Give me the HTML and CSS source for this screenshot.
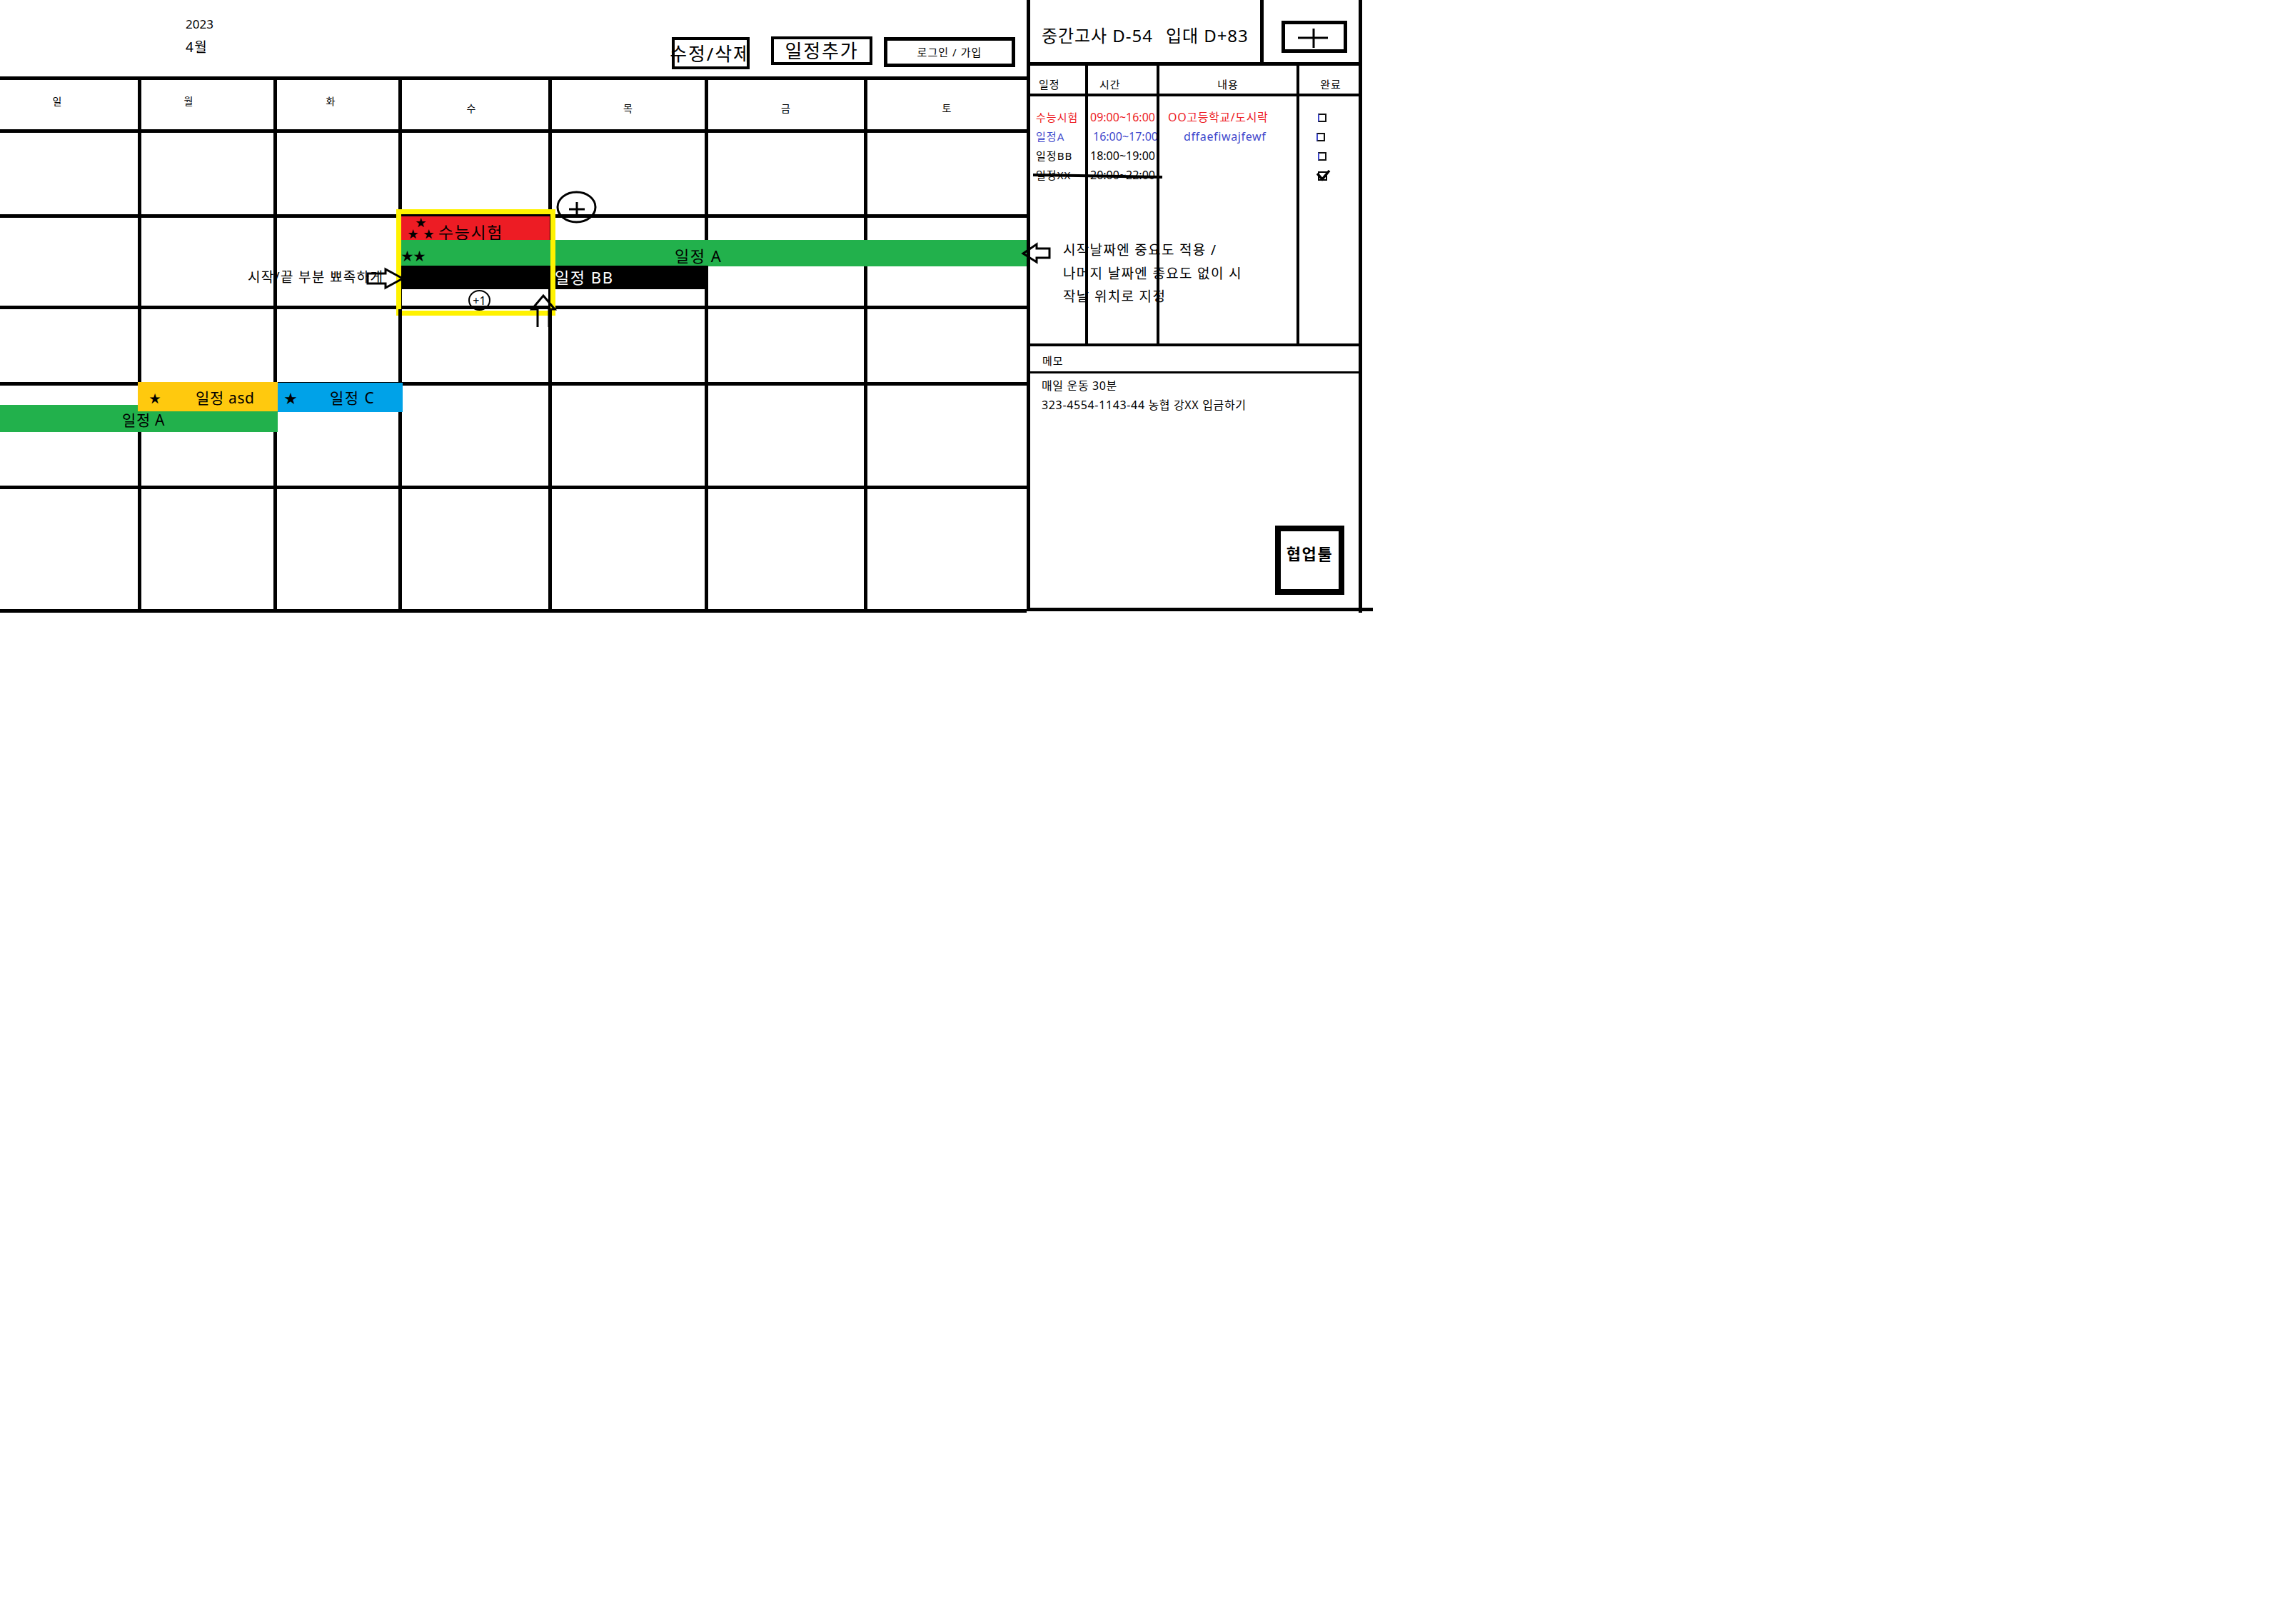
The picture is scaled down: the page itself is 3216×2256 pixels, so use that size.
FILE: index.html
```html
<!DOCTYPE html>
<html lang="ko">
<head>
<meta charset="utf-8">
<title>캘린더</title>
<link rel="stylesheet" href="styles.css">
</head>
<body>
<div class="page">
  <main class="main">
    <header class="topbar">
      <div class="date">
        <div class="year">2023</div>
        <div class="month">4월</div>
      </div>
      <div class="actions">
        <div class="btn btn-edit"><span>수정/삭제</span></div>
        <div class="btn btn-add"><span>일정추가</span></div>
        <div class="btn btn-login"><span>로그인 / 가입</span></div>
      </div>
    </header>

    <section class="calendar">
      <div class="row dow">
        <div class="cell d-hi d-sun">일</div>
        <div class="cell d-hi d-mon">월</div>
        <div class="cell d-hi d-tue">화</div>
        <div class="cell d-wed">수</div>
        <div class="cell">목</div>
        <div class="cell">금</div>
        <div class="cell">토</div>
      </div>
      <div class="row week w1">
        <div class="cell"></div><div class="cell"></div><div class="cell"></div><div class="cell"></div><div class="cell"></div><div class="cell"></div><div class="cell"></div>
      </div>
      <div class="row week w2">
        <div class="cell"></div><div class="cell"></div><div class="cell"></div><div class="cell"></div><div class="cell"></div><div class="cell"></div><div class="cell"></div>
        <div class="ev ev-red">
          <span class="stars3"><span class="star">★</span><span class="stars-pair"><span class="star">★</span><span class="star">★</span></span></span>
          <span class="ev-text">수능시험</span>
        </div>
        <div class="ev ev-a1"><span class="star s-17">★★</span><span class="ev-text">일정 A</span></div>
        <div class="ev ev-bb"><span class="ev-text">일정 BB</span></div>
        <div class="focus-frame"></div>
      </div>
      <div class="row week w3">
        <div class="cell"></div><div class="cell"></div><div class="cell"></div><div class="cell"></div><div class="cell"></div><div class="cell"></div><div class="cell"></div>
      </div>
      <div class="row week w4">
        <div class="cell"></div><div class="cell"></div><div class="cell"></div><div class="cell"></div><div class="cell"></div><div class="cell"></div><div class="cell"></div>
        <div class="ev ev-a2"><span class="ev-text">일정 A</span></div>
        <div class="ev ev-asd"><span class="star s-16">★</span><span class="ev-text">일정 asd</span></div>
        <div class="ev ev-c"><span class="star s-18">★</span><span class="ev-text">일정 C</span></div>
      </div>
      <div class="row week w5">
        <div class="cell"></div><div class="cell"></div><div class="cell"></div><div class="cell"></div><div class="cell"></div><div class="cell"></div><div class="cell"></div>
      </div>
    </section>
  </main>

  <aside class="side">
    <div class="side-head">
      <div class="dday"><span>중간고사 D-54</span><span class="dday-gap">입대 D+83</span></div>
      <div class="add-cell">
        <div class="add-btn">
          <svg width="82" height="35" viewBox="0 0 82 35"><path d="M18 19H60M40 6V33" stroke="#000" stroke-width="3" fill="none"/></svg>
        </div>
      </div>
    </div>

    <div class="todo">
      <div class="col c1">
        <div class="th">일정</div>
        <div class="tb">
          <div class="td red">수능시험</div>
          <div class="td blue">일정A</div>
          <div class="td">일정BB</div>
          <div class="td">일정XX</div>
        </div>
      </div>
      <div class="col c2">
        <div class="th">시간</div>
        <div class="tb">
          <div class="td red">09:00~16:00</div>
          <div class="td blue shift">16:00~17:00</div>
          <div class="td">18:00~19:00</div>
          <div class="td">20:00~22:00</div>
        </div>
      </div>
      <div class="col c3">
        <div class="th">내용</div>
        <div class="tb">
          <div class="td red">OO고등학교/도시락</div>
          <div class="td blue shift">dffaefiwajfewf</div>
          <div class="td"></div>
          <div class="td"></div>
        </div>
      </div>
      <div class="col c4">
        <div class="th">완료</div>
        <div class="tb">
          <div class="td"><span class="box"></span></div>
          <div class="td shift"><span class="box"></span></div>
          <div class="td"><span class="box"></span></div>
          <div class="td"><svg class="checked" width="20" height="16" viewBox="0 0 20 16"><rect x="3" y="3" width="11" height="11" fill="none" stroke="#000" stroke-width="2"/><path d="M1 5L8 13L18 1" fill="none" stroke="#000" stroke-width="3.5"/></svg></div>
        </div>
      </div>
    </div>

    <div class="memo-head">메모</div>
    <div class="memo-body">
      <p>매일 운동 30분</p>
      <p>323-4554-1143-44 농협 강XX 입금하기</p>
      <div class="collab">협업툴</div>
    </div>
  </aside>

  <div class="notes">
    <svg class="n-plus" width="57" height="46" viewBox="0 0 57 46">
      <ellipse cx="28.5" cy="23" rx="26.5" ry="21" fill="none" stroke="#000" stroke-width="3"/>
      <path d="M18 26H40M29 16V34" stroke="#000" stroke-width="3" fill="none"/>
    </svg>
    <div class="n-plus1">+1</div>
    <svg class="n-up" width="42" height="50" viewBox="0 0 42 50">
      <polyline points="13,48 13,23 5,23 21,4 37,23 29,23 29,48" fill="none" stroke="#000" stroke-width="3"/>
    </svg>
    <p class="n-tip-left">시작/끝 부분 뾰족하게</p>
    <svg class="n-right" width="56" height="32" viewBox="0 0 56 32">
      <polygon points="3,9 28,9 28,3 52,16 28,29 28,23 3,23" fill="none" stroke="#000" stroke-width="3"/>
    </svg>
    <svg class="n-left" width="44" height="31" viewBox="0 0 44 31">
      <polygon points="3,16 22,3 22,9 40,9 40,22 22,22 22,28" fill="none" stroke="#000" stroke-width="3"/>
    </svg>
    <p class="n-tip-right">시작날짜엔 중요도 적용 /<br>나머지 날짜엔 중요도 없이 시<br>작날 위치로 지정</p>
    <svg class="n-strike" width="188" height="12" viewBox="0 0 188 12">
      <line x1="3" y1="5" x2="184" y2="8" stroke="#000" stroke-width="4"/>
    </svg>
  </div>
</div>
</body>
</html>
```

FILE: styles.css
```css
* { box-sizing: border-box; }

html, body {
  margin: 0;
  padding: 0;
  background: #fff;
}

body {
  font-family: "Noto Sans", "Noto Sans CJK KR", sans-serif;
  color: #000;
}

/* Hangul-heavy text: widen the advance a little */
.month, .dow, .btn-edit span, .btn-add span, .btn-login span,
.ev-text, .th, .c1 .td, .memo-head,
.collab, .n-tip-left, .n-tip-right {
  letter-spacing: 0.07em;
}
.dday, .memo-body p, .c3 .td { letter-spacing: 0.04em; }
.ev-asd .ev-text, .ev-a2 .ev-text { letter-spacing: 0.03em; }

.page {
  position: relative;
  display: flex;
  align-items: flex-start;
  width: 1908px;
}

/* ---------- left: header + calendar ---------- */
.main {
  width: 1438px;
  flex: none;
}

.topbar {
  height: 107px;
  display: flex;
  align-items: flex-start;
  padding: 0 16px 0 260px;
}

.date { padding-top: 23px; }
.year { font-size: 17px; line-height: 22px; }
.month { font-size: 19px; line-height: 24px; margin-top: 9px; }

.actions {
  margin-left: auto;
  display: flex;
  align-items: flex-start;
  padding-top: 51px;
}

.btn {
  display: flex;
  justify-content: center;
  align-items: center;
  border: 4px solid #000;
  white-space: nowrap;
  line-height: 1;
}

.btn-edit { width: 109px; height: 45px; margin-top: 1px; font-size: 26px; }
.btn-add { width: 142px; height: 40px; margin-left: 30px; font-size: 26px; }
.btn-login { width: 184px; height: 42px; margin-left: 16px; margin-top: 1px; border-width: 5px; font-size: 15px; }

.calendar { border-top: 5px solid #000; }

.row {
  position: relative;
  display: grid;
  grid-template-columns: 198px 190px 175px 210px 219px 223px 223px;
  border-bottom: 5px solid #000;
}

.cell { border-right: 5px solid #000; }
.row > .cell:nth-child(7) { border-right: 0; }

.dow { height: 74px; }
.dow .cell {
  display: flex;
  justify-content: center;
  align-items: flex-start;
  padding-top: 30px;
  font-size: 14px;
  line-height: 20px;
}
.dow .d-hi { padding-top: 20px; }
.dow .d-sun { padding-right: 32px; }
.dow .d-mon { padding-right: 52px; }
.dow .d-tue { padding-right: 19px; }
.dow .d-wed { padding-right: 10px; }

.w1 { height: 119px; }
.w2 { height: 128px; }
.w3 { height: 107px; }
.w4 { height: 145px; }
.w5 { height: 173px; }

/* ---------- events ---------- */
.ev {
  position: absolute;
  display: flex;
  align-items: flex-start;
  white-space: nowrap;
  line-height: 24px;
}

.star { font-family: "Noto Sans CJK KR", "DejaVu Sans", sans-serif; }
.s-16 { font-size: 16px; }
.s-17 { font-size: 17px; }
.s-18 { font-size: 18px; }

.ev-red {
  left: 562px; top: -2px; width: 208px; height: 33px;
  background: #ed1c24;
}
.stars3 {
  display: flex;
  flex-direction: column;
  align-items: center;
  margin-left: 9px;
  font-size: 15px;
  line-height: 16px;
}
.stars-pair { display: flex; gap: 7px; }
.ev-red .ev-text { margin: 10px 0 0 6px; font-size: 23px; }

.ev-a1 {
  left: 562px; top: 31px; width: 881px; height: 37px;
  padding-top: 10px;
  background: #22b14c;
}
.ev-a1 .ev-text { margin-left: 349px; font-size: 22px; }

.ev-bb {
  left: 562px; top: 67px; width: 430px; height: 33px;
  padding: 4px 0 0 215px;
  background: #000;
  color: #fff;
  font-size: 22px;
}

.focus-frame {
  position: absolute;
  left: 555px; top: -12px; width: 223px; height: 149px;
  border: 7px solid #fff200;
}

.ev-a2 {
  left: 0; top: 27px; width: 389px; height: 38px;
  padding: 9px 0 0 171px;
  background: #22b14c;
  font-size: 21px;
}
.ev-asd {
  left: 193px; top: -5px; width: 196px; height: 41px;
  padding: 10px 0 0 16px;
  background: #ffc90e;
}
.ev-asd .ev-text { margin-left: 49px; font-size: 21px; }
.ev-c {
  left: 389px; top: -4px; width: 175px; height: 41px;
  padding: 9px 0 0 9px;
  background: #00a2e8;
}
.ev-c .ev-text { margin-left: 46px; font-size: 21px; }

/* ---------- right side panel ---------- */
.side {
  position: relative;
  flex: none;
  width: 470px;
  height: 856px;
  display: flex;
  flex-direction: column;
  border-left: 5px solid #000;
  border-right: 5px solid #000;
  border-bottom: 5px solid #000;
}
.side::after {
  content: "";
  position: absolute;
  right: -20px; bottom: -5px;
  width: 20px; height: 5px;
  background: #000;
}
.side::before {
  content: "";
  position: absolute;
  right: -5px; bottom: -9px;
  width: 5px; height: 4px;
  background: #000;
}

.side-head {
  height: 92px;
  flex: none;
  display: flex;
  border-bottom: 5px solid #000;
}
.dday {
  flex: 1;
  display: flex;
  align-items: center;
  padding: 9px 0 0 16px;
  font-size: 24px;
  white-space: nowrap;
}
.dday-gap { margin-left: 18px; }
.add-cell {
  width: 138px;
  flex: none;
  border-left: 5px solid #000;
  padding: 29px 0 0 25px;
}
.add-btn {
  width: 92px;
  height: 45px;
  border: 5px solid #000;
}
.add-btn svg { display: block; }

.todo {
  height: 393px;
  flex: none;
  display: flex;
  border-bottom: 4px solid #000;
}
.col {
  border-right: 4px solid #000;
  overflow: hidden;
  white-space: nowrap;
}
.col:last-child { border-right: 0; }
.c1 { width: 81px; }
.c2 { width: 100px; }
.c3 { width: 196px; }
.c4 { width: 83px; }

.th {
  height: 43px;
  border-bottom: 4px solid #000;
  padding-top: 16px;
  font-size: 15px;
  line-height: 20px;
}
.c1 .th { padding-left: 12px; }
.c2 .th { padding-left: 16px; }
.c3 .th { text-align: center; }
.c4 .th { text-align: center; padding-left: 5px; }

.tb { padding-top: 16px; }
.td {
  height: 27px;
  line-height: 27px;
  font-size: 15px;
}
.c1 .td { padding-left: 8px; }
.c2 .td { padding-left: 3px; font-size: 16px; }
.c2 .td.shift { padding-left: 7px; }
.c3 .td { padding-left: 12px; font-size: 16px; }
.c3 .td.shift { padding-left: 34px; }
.c4 .td { display: flex; align-items: center; padding-left: 26px; }
.c4 .td.shift { padding-left: 24px; }

.red { color: #ed1c24; }
.blue { color: #3f48cc; }

.box {
  display: block;
  width: 12px;
  height: 12px;
  border: 2px solid #111;
  border-left-color: #3f48cc;
}
.checked { display: block; margin-left: -2px; }

.memo-head {
  height: 38px;
  flex: none;
  border-bottom: 3px solid #000;
  padding: 10px 0 0 17px;
  font-size: 15px;
  line-height: 20px;
}
.memo-body {
  flex: 1;
  display: flex;
  flex-direction: column;
  padding: 4px 0 0 16px;
}
.memo-body p {
  margin: 0;
  font-size: 16px;
  line-height: 27px;
  white-space: nowrap;
}
.collab {
  margin-top: auto;
  align-self: flex-end;
  margin-right: 20px;
  margin-bottom: 18px;
  width: 97px;
  height: 97px;
  border: 8px solid #000;
  padding-top: 17px;
  text-align: center;
  font-size: 22px;
  line-height: 28px;
  font-weight: bold;
}

/* ---------- hand-drawn annotations ---------- */
.notes {
  position: absolute;
  left: 0; top: 0;
  width: 0; height: 0;
}
.notes > * { position: absolute; margin: 0; }

.n-plus { left: 779px; top: 267px; }
.n-plus1 {
  left: 656px; top: 406px;
  width: 31px; height: 29px;
  border: 2px solid #000;
  border-radius: 50%;
  display: flex;
  justify-content: center;
  align-items: center;
  font-size: 16px;
  line-height: 1;
}
.n-up { left: 740px; top: 410px; }
.n-tip-left {
  left: 347px; top: 376px;
  font-size: 19px;
  line-height: 24px;
  white-space: nowrap;
}
.n-right { left: 512px; top: 374px; }
.n-left { left: 1430px; top: 339px; }
.n-tip-right {
  left: 1489px; top: 334px;
  font-size: 19px;
  line-height: 32.5px;
  white-space: nowrap;
}
.n-strike { left: 1444px; top: 240px; }
```
